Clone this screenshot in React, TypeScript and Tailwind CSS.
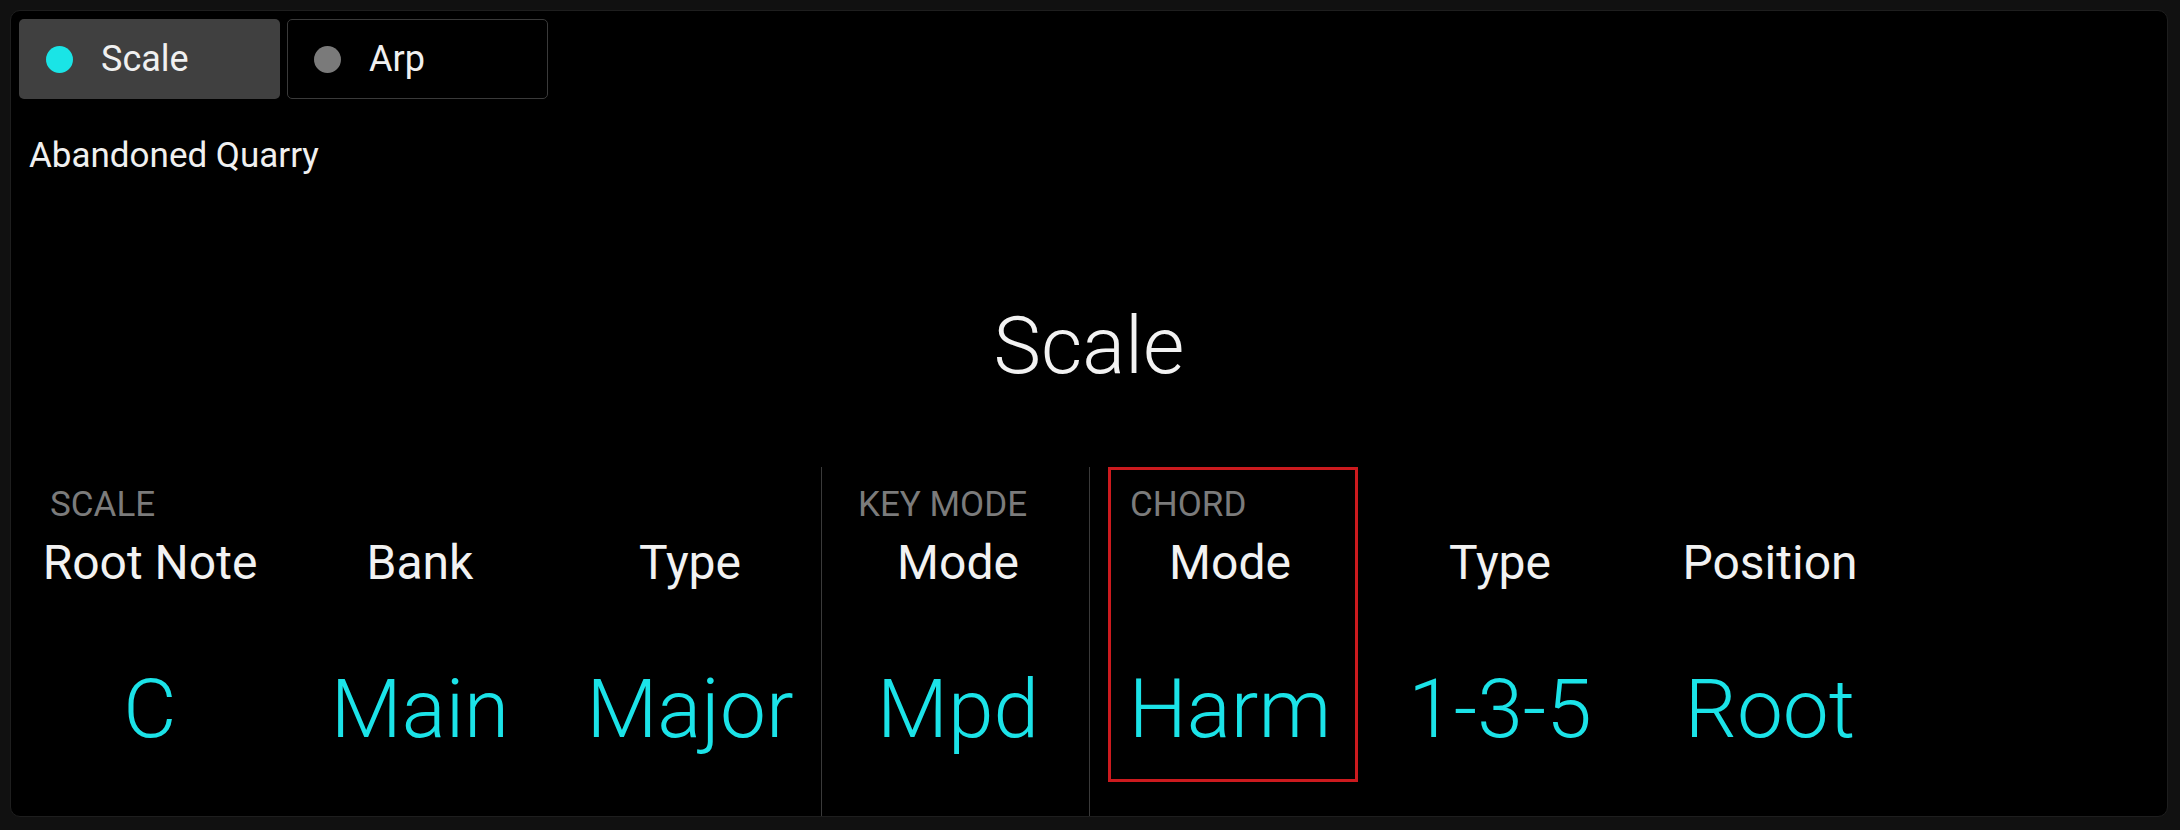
import React from 'react';

type Param = {
  label?: string;
  name: string;
  value: string;
  focused?: boolean;
};

const scaleParams: Param[] = [
  { label: 'SCALE', name: 'Root Note', value: 'C' },
  { name: 'Bank', value: 'Main' },
  { name: 'Type', value: 'Major' },
];
const keyParams: Param[] = [{ label: 'KEY MODE', name: 'Mode', value: 'Mpd' }];
const chordParams: Param[] = [
  { label: 'CHORD', name: 'Mode', value: 'Harm', focused: true },
  { name: 'Type', value: '1-3-5' },
  { name: 'Position', value: 'Root' },
];

function Tab({ name, active }: { name: string; active?: boolean }) {
  return (
    <div
      className={
        active
          ? 'flex h-[80px] w-[261px] items-center rounded-[5px] bg-[#404040] pl-[27px]'
          : 'flex h-[80px] w-[261px] items-center rounded-[5px] border border-[#3a3a3a] bg-black pl-[26px]'
      }
    >
      <span className={active ? 'h-[27px] w-[27px] rounded-full bg-[#1ae4e6]' : 'h-[27px] w-[27px] rounded-full bg-[#7a7a7a]'} />
      <span className="ml-[28px] text-[36px] leading-none text-[#f0f0f0]">{name}</span>
    </div>
  );
}

function ParamBox({ p }: { p: Param }) {
  return (
    <div
      className={
        p.focused
          ? 'flex h-[315px] w-[250px] shrink-0 flex-col border-[3px] border-[#cc1a1e] pt-[17px]'
          : 'flex h-[315px] w-[250px] shrink-0 flex-col border-[3px] border-transparent pt-[17px]'
      }
    >
      <div className="h-[35px] pl-[19px] text-[35px] leading-none text-[#7b7b7b]">{p.label ?? ''}</div>
      <div className="mt-[17px] pr-[6px] text-center text-[48px] leading-none text-[#f2f2f2]">{p.name}</div>
      <div className="mt-[81px] pr-[6px] text-center text-[82px] font-light leading-none text-[#1be3e8]">{p.value}</div>
    </div>
  );
}

export default function App() {
  return (
    <div className="h-[830px] w-[2180px] bg-[#111111] pl-[10px] pr-[12px] pt-[10px] font-[Roboto,sans-serif]">
      <div className="flex h-[807px] flex-col rounded-[10px] border border-[#1e1e1e] bg-black">
        <div className="flex gap-[7px] pl-[8px] pt-[8px]">
          <Tab name="Scale" active />
          <Tab name="Arp" />
        </div>
        <div className="mt-[39px] pl-[18px] text-[35px] leading-none text-[#f0f0f0]">Abandoned Quarry</div>
        <div className="mt-[133px] text-center text-[80px] font-light leading-none text-[#f2f2f2]">Scale</div>
        <div className="mt-[81px] flex flex-1 pl-[17px]">
          <div className="flex gap-[20px]">
            {scaleParams.map((p) => (
              <ParamBox key={p.name} p={p} />
            ))}
          </div>
          <div className="ml-[3px] mr-[14px] w-px bg-[#3a3a3a]" />
          {keyParams.map((p) => (
            <ParamBox key={p.name} p={p} />
          ))}
          <div className="ml-[3px] mr-[18px] w-px bg-[#3a3a3a]" />
          <div className="flex gap-[20px]">
            {chordParams.map((p) => (
              <ParamBox key={p.name} p={p} />
            ))}
          </div>
        </div>
      </div>
    </div>
  );
}
